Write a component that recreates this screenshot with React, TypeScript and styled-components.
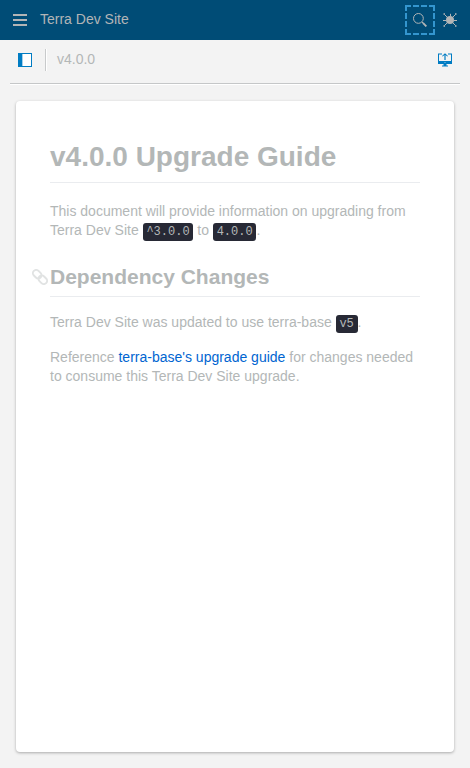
import React from 'react';
import styled, { createGlobalStyle } from 'styled-components';

const Global = createGlobalStyle`
  * { box-sizing: border-box; }
  body { margin: 0; background: #f3f3f3; font-family: "Liberation Sans", Arial, sans-serif; font-size: 14px; color: #b3b7b7; }
`;

const Page = styled.div`
  display: flex;
  flex-direction: column;
  height: 768px;
  overflow: hidden;
`;

const Header = styled.header`
  display: flex;
  align-items: center;
  height: 40px;
  padding: 0 5px;
  flex: none;
  background: #004c76;
  color: #b2b5b6;
`;

const IconButton = styled.button<{ $focused?: boolean }>`
  display: flex;
  align-items: center;
  justify-content: center;
  width: 30px;
  height: 30px;
  padding: 0;
  border: 0;
  background: ${(p) => (p.$focused
    ? `repeating-linear-gradient(90deg, #3496cf 0 6px, transparent 6px 8px) 0 0 / 30px 2px no-repeat,
       repeating-linear-gradient(90deg, #3496cf 0 6px, transparent 6px 8px) 0 28px / 30px 2px no-repeat,
       repeating-linear-gradient(180deg, #3496cf 0 6px, transparent 6px 8px) 0 0 / 2px 30px no-repeat,
       repeating-linear-gradient(180deg, #3496cf 0 6px, transparent 6px 8px) 28px 0 / 2px 30px no-repeat`
    : 'transparent')};
  color: inherit;
  svg { display: block; }
`;

const SiteTitle = styled.div`
  flex: 1;
  padding-left: 5px;
  line-height: 16px;
  margin-top: -2px;
`;

const Toolbar = styled.div`
  display: flex;
  align-items: center;
  flex: none;
  height: 44px;
  margin: 0 10px;
  padding-bottom: 4px;
  border-bottom: 1px solid #c5c7c8;
  box-shadow: 0 1px 0 #fff;
  color: #007cc3;
`;

const Divider = styled.div`
  width: 1px;
  height: 22px;
  margin: 0 11px 0 5px;
  background: #c8cacb;
  box-shadow: 1px 0 0 #fff;
`;

const Version = styled.div`
  flex: 1;
  line-height: 16px;
  margin-top: -1px;
  color: #b3b7b7;
`;

const Card = styled.main`
  flex: none;
  height: 651px;
  margin: 17px 16px 0;
  padding: 35px 34px 0;
  border-radius: 4px;
  background: #fff;
  box-shadow: 0 1px 3px rgba(0, 0, 0, 0.3);
`;

const Title = styled.h1`
  height: 47px;
  margin: 0 0 19px;
  border-bottom: 1px solid #eaecef;
  font-size: 28px;
  line-height: 42px;
`;

const Section = styled.h2`
  position: relative;
  height: 34px;
  margin: 21px 0 16px;
  border-bottom: 1px solid #eaecef;
  font-size: 21px;
  line-height: 28px;
`;

const Anchor = styled.a`
  position: absolute;
  left: -18px;
  top: 6px;
  color: #e1e3e3;
  svg { display: block; }
`;

const Paragraph = styled.p`
  margin: 0 0 14px;
  line-height: 19px;
`;

const Code = styled.code`
  padding: 2.4px 3.8px;
  border-radius: 3px;
  background: #272935;
  color: #b3b7b7;
  font-family: "Liberation Mono", monospace;
  font-size: 12px;
`;

const Link = styled.a`
  color: #0065d1;
  text-decoration: none;
`;

const MenuIcon = () => (
  <svg width="14" height="14" viewBox="0 0 14 14" fill="currentColor" shapeRendering="crispEdges">
    <path d="M0 1h14v2H0zM0 6h14v2H0zM0 11h14v2H0z" />
  </svg>
);

const SearchIcon = () => (
  <svg width="14" height="14" viewBox="0 0 14 14" fill="none" stroke="currentColor">
    <circle cx="5.4" cy="5.4" r="4.9" />
    <path d="M8.900 8.900l1.300 1.300" />
    <path d="M9.900 9.900l3.500 3.500" strokeWidth="1.9" />
  </svg>
);

const BugIcon = () => (
  <svg width="14" height="14" viewBox="0 0 14 14" fill="currentColor" stroke="currentColor">
    <circle cx="7" cy="7" r="4" stroke="none" />
    <path d="M1.500 1.500L4.500 4.500M12.500 1.500L9.500 4.500M1.500 12.500L4.500 9.500M12.500 12.500L9.500 9.500M7.500 .8V3M0 7.500h3M11 7.500h3" strokeWidth="1" />
    <path d="M.5 1h1.500M12 1h1.500M.5 13h1.500M12 13h1.500" strokeWidth="1.400" />
  </svg>
);

const PanelIcon = () => (
  <svg width="14" height="14" viewBox="0 0 14 14" shapeRendering="crispEdges">
    <path d="M.5.5h13v13H.5z" fill="#fff" stroke="currentColor" />
    <path d="M0 0h4v14H0z" fill="currentColor" />
    <path d="M4 1h1v12H4z" fill="#a4d0ea" />
  </svg>
);

const DisplayIcon = () => (
  <svg width="14" height="14" viewBox="0 0 14 14" fill="currentColor">
    <path d="M0 .5h4v1H1V8h12V1.500h-3v-1h4V11H0z" />
    <path d="M7 .2l3 2.800-.7.6-1.700-1.500V7H6.400V2.100L4.700 3.600 4 3z" />
    <path d="M6 9.200h2v.6H6z" fill="#8fc5e5" />
    <path d="M5.500 11h3v1.500H10v1H4v-1h1.500z" />
  </svg>
);

const LinkIcon = () => (
  <svg width="16" height="16" viewBox="0 0 16 16" fill="none" stroke="currentColor" strokeWidth="1.9">
    <rect x="-4.700" y="-3.300" width="9.400" height="6.600" rx="3.300" transform="translate(5.200 5.200) rotate(45)" />
    <rect x="-4.700" y="-3.300" width="9.400" height="6.600" rx="3.300" transform="translate(10.800 10.800) rotate(45)" />
  </svg>
);

export default function App() {
  return (
    <Page>
      <Global />
      <Header>
        <IconButton aria-label="Menu"><MenuIcon /></IconButton>
        <SiteTitle>Terra Dev Site</SiteTitle>
        <IconButton aria-label="Search" $focused><SearchIcon /></IconButton>
        <IconButton aria-label="Report an issue"><BugIcon /></IconButton>
      </Header>
      <Toolbar>
        <IconButton aria-label="Toggle panel"><PanelIcon /></IconButton>
        <Divider />
        <Version>v4.0.0</Version>
        <IconButton aria-label="Open display"><DisplayIcon /></IconButton>
      </Toolbar>
      <Card>
        <Title>v4.0.0 Upgrade Guide</Title>
        <Paragraph>
          This document will provide information on upgrading from Terra Dev Site <Code>^3.0.0</Code> to <Code>4.0.0</Code>.
        </Paragraph>
        <Section>
          <Anchor href="#dependency-changes" aria-label="Dependency Changes"><LinkIcon /></Anchor>
          Dependency Changes
        </Section>
        <Paragraph>
          Terra Dev Site was updated to use terra-base <Code>v5</Code>.
        </Paragraph>
        <Paragraph>
          Reference <Link href="#upgrade">terra-base's upgrade guide</Link> for changes needed to consume this Terra Dev Site upgrade.
        </Paragraph>
      </Card>
    </Page>
  );
}
